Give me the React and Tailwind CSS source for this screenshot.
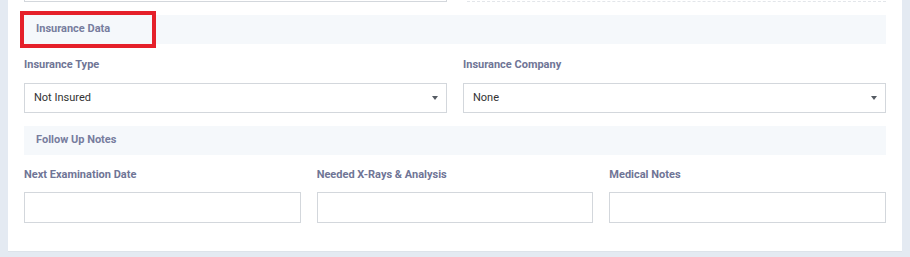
import React from 'react';

const font = { fontFamily: 'Roboto, "Liberation Sans", sans-serif' };

const SectionBar = ({ title, highlight }) => (
    <div className="relative h-[29px] bg-[#f5f8fb] flex items-center px-3">
        <span className="text-[11px] font-bold text-[#777d9e]">{title}</span>
        {highlight && (
            <div className="absolute left-[-4px] top-[-4px] w-[136px] h-[37px] border-[4px] border-[#e5202a]"></div>
        )}
    </div>
);

const Label = ({ children }) => (
    <div className="h-[16px] flex items-center text-[11px] font-bold text-[#6f7596]">{children}</div>
);

const Select = ({ value }) => (
    <div className="h-[30px] border border-[#d3d7dc] bg-white flex items-center justify-between pl-[9px] pr-[8px]">
        <span className="text-[11px] text-[#333]">{value}</span>
        <svg width="6" height="4" viewBox="0 0 6 4">
            <path d="M0 0H6L3 4Z" fill="#555b63" />
        </svg>
    </div>
);

const Input = () => <div className="h-[31px] border border-[#d3d7dc] bg-white"></div>;

export default function App() {
    return (
        <div className="w-[910px] h-[257px] bg-[#e4eaf2] px-2 overflow-hidden" style={font}>
            <div className="h-[252px] bg-white border-b border-[#dde3ea] px-4">
                {/* remnants of previous row */}
                <div className="grid grid-cols-2 gap-4">
                    <div className="h-[2px] border-b border-x border-[#d3d7dc]"></div>
                    <div className="h-[2px] border-b border-dashed border-[#e3e6ea] ml-1"></div>
                </div>

                <div className="mt-[13px]">
                    <SectionBar title="Insurance Data" highlight />
                </div>

                <div className="grid grid-cols-2 gap-4 mt-[13px]">
                    <div>
                        <Label>Insurance Type</Label>
                        <div className="mt-[10px]">
                            <Select value="Not Insured" />
                        </div>
                    </div>
                    <div>
                        <Label>Insurance Company</Label>
                        <div className="mt-[10px]">
                            <Select value="None" />
                        </div>
                    </div>
                </div>

                <div className="mt-[13px]">
                    <SectionBar title="Follow Up Notes" />
                </div>

                <div className="grid grid-cols-3 gap-4 mt-[12px]">
                    <div>
                        <Label>Next Examination Date</Label>
                        <div className="mt-[9px]"><Input /></div>
                    </div>
                    <div>
                        <Label>Needed X-Rays &amp; Analysis</Label>
                        <div className="mt-[9px]"><Input /></div>
                    </div>
                    <div>
                        <Label>Medical Notes</Label>
                        <div className="mt-[9px]"><Input /></div>
                    </div>
                </div>
            </div>
        </div>
    );
}
